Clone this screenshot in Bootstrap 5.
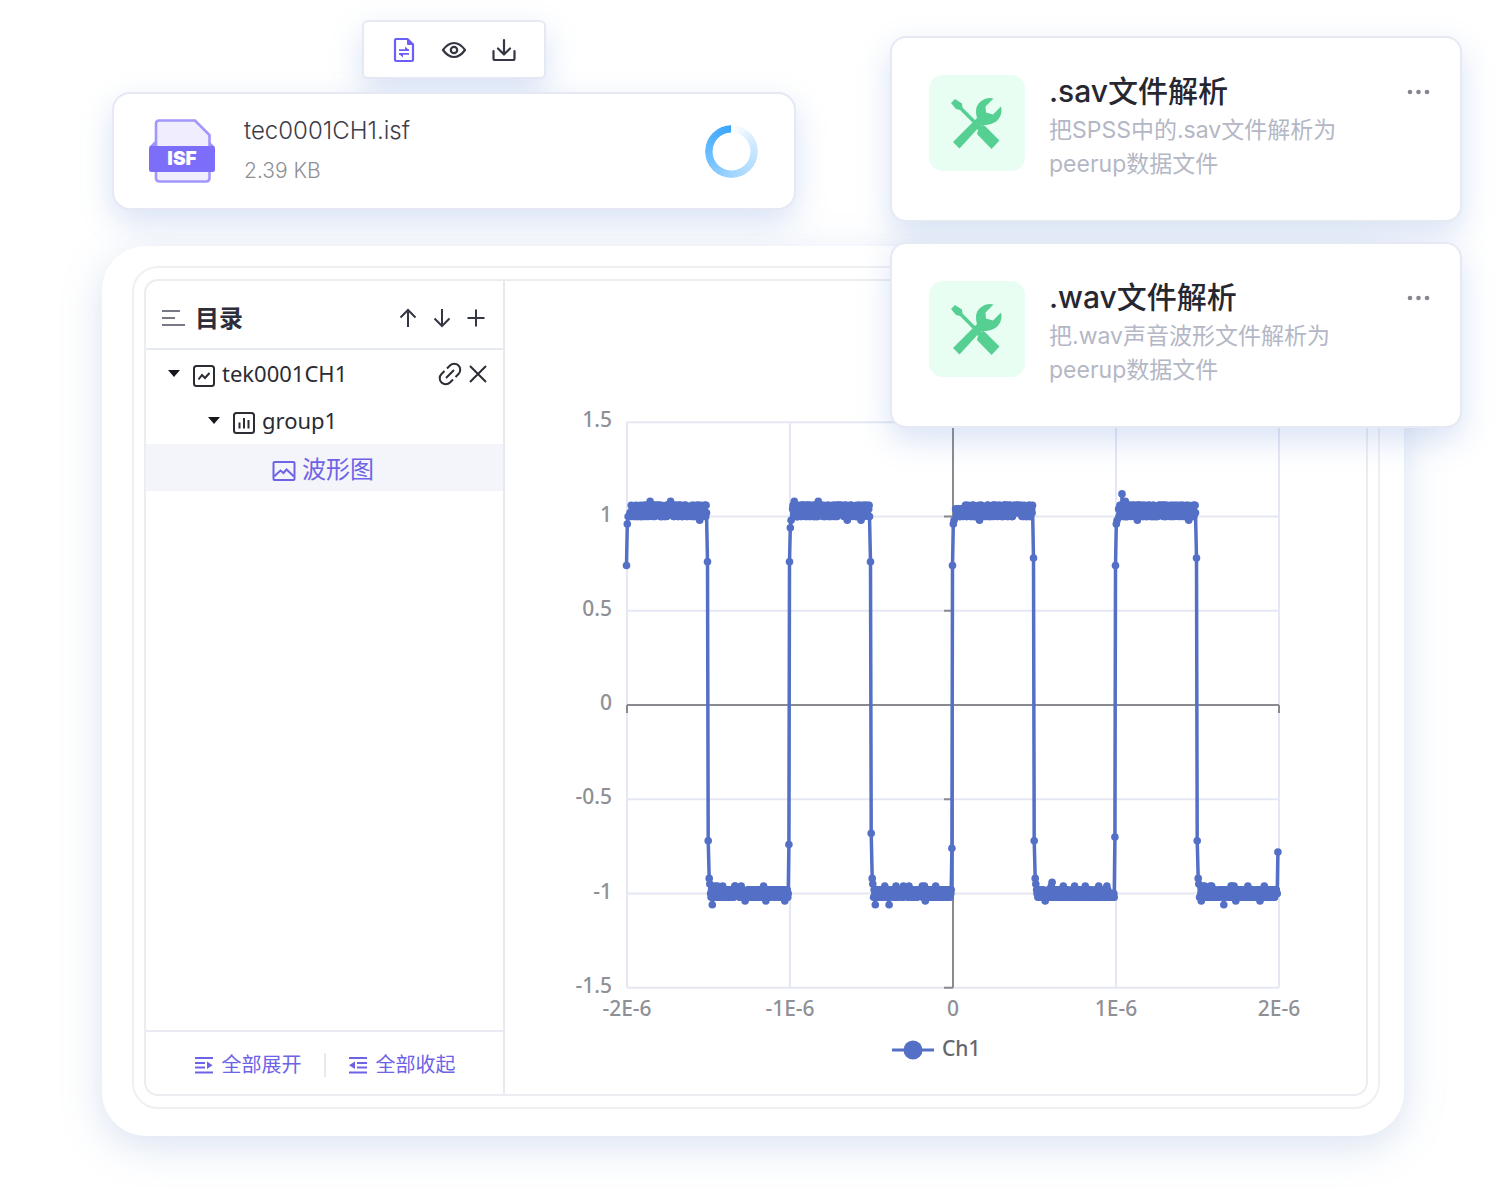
<!DOCTYPE html>
<html lang="zh-CN">
<head>
<meta charset="utf-8">
<meta name="viewport" content="width=device-width, initial-scale=1">
<title>文件解析</title>
<link href="https://cdn.jsdelivr.net/npm/bootstrap@5.3.0/dist/css/bootstrap.min.css" rel="stylesheet">
<style>
  :root { --ink: #2d2e3a; --violet: #6e63e6; --edge: #e6e9f4; --shade: 0 12px 32px rgba(92, 132, 214, .24); }
  body { font-family: "Noto Sans", "Noto Sans CJK SC", sans-serif; color: var(--ink); background: #fff; }
  svg { display: block; }
  .stage { padding: 20px 98px 58px 102px; overflow: hidden; }
  .upload { width: 684px; max-width: 100%; margin: 0 0 36px 10px; gap: 13px; }
  .floaty { background: #fff; border: 2px solid var(--edge); box-shadow: var(--shade); }
  .tools-strip { height: 59px; padding: 0 28px; gap: 24px; border-radius: 6px; }
  .plain-btn { background: none; border: 0; padding: 0; color: inherit; }
  .convert { color: #6c5ff6; }
  .file-box { height: 118px; padding: 0 36px 0 35px; gap: 29px; border-radius: 18px; }
  .latin { font-family: Inter, "Noto Sans CJK SC", sans-serif; }
  .file-name { font-size: 24px; line-height: 32px; font-weight: 300; color: #3c3d49; }
  .file-size { font-size: 21px; line-height: 32px; font-weight: 300; color: #8f8f94; margin-top: 8px; }
  .ring { width: 53px; height: 53px; border-radius: 50%;
    background: conic-gradient(#fff, #cfe9ff 20%, #9fd5ff 50%, #6cbeff 72%, #38a6fd);
    -webkit-mask: radial-gradient(closest-side, transparent 70%, #000 73%);
    mask: radial-gradient(closest-side, transparent 70%, #000 73%); }

  .shell { background: #fff; border-radius: 44px; padding: 20px 24px 27px 30px; box-shadow: 0 10px 40px rgba(110, 145, 200, .26); }
  .frame-outer { border: 2px solid #f0f0f2; border-radius: 26px; padding: 11px 10px; }
  .frame-inner { border: 2px solid #ecedf0; border-radius: 14px; }
  .side { width: 359px; border-right: 2px solid #e9eaee; }
  .side-head { height: 69px; padding: 6px 17px 0 15px; border-bottom: 2px solid #e6ebf2; }
  .side-title { font-size: 24px; font-weight: 700; line-height: 32px; }
  .tree-row { height: 47px; font-size: 22px; gap: 6px; color: #2a2b33; }
  .lv1 { padding: 0 15px 0 20px; }
  .lv2 { padding-left: 60px; }
  .lv3 { padding: 2px 0 0 126px; background: #f4f5fb; font-size: 24px; }
  .lv3, .side-foot { color: var(--violet); }
  .side-foot { height: 64px; border-top: 2px solid #e9eaf4; font-size: 20px; padding-top: 4px; }
  .side-foot button { gap: 8px; }
  .split { width: 2px; height: 24px; background: #e8eaf0; margin: 0 22px; }
  .plot text { font-family: "Noto Sans", sans-serif; font-size: 21px; font-weight: 500; fill: #8f9096; }
  .plot .legend-text { fill: #66676d; }

  .overlays { position: absolute; top: 36px; right: 40px; width: 572px; gap: 20px; }
  .tool-box { min-height: 186px; border-radius: 16px; padding: 33px 30px 34px 37px; gap: 24px; }
  .tile { width: 96px; height: 96px; border-radius: 14px; background: #e9fef3; color: #55cf92; margin-top: 4px; padding-top: 2px; }
  .tool-title { font-size: 30px; line-height: 40px; font-weight: 500; color: #262731; margin: 0; }
  .tool-desc { font-size: 23px; line-height: 34px; font-weight: 400; color: #b4b7c5; margin: 2px 0 0; }
  .more { color: #85868f; margin-top: 18px; }
</style>
</head>
<body>
<main class="stage position-relative">
  <section class="upload d-flex flex-column align-items-center">
    <div class="floaty tools-strip d-flex align-items-center">
      <button class="plain-btn convert" aria-label="转换">
        <svg width="24" height="28" viewBox="0 0 24 28" fill="none" stroke="currentColor" stroke-width="2.200"><path d="M3 4.200Q3 3 4.200 3H15.500L21 8.500V23.800Q21 25 19.800 25H4.200Q3 25 3 23.800Z"/><path d="M15.500 3V8.500H21Z" fill="currentColor" stroke-width="1"/><path d="M7 14.200H17M7 17.800H17" stroke-width="1.800"/><path d="M13 10.500V14.500H17.500ZM11 21.500V17.500H6.500Z" fill="currentColor" stroke="none"/></svg>
      </button>
      <button class="plain-btn" aria-label="预览">
        <svg width="28" height="28" viewBox="0 0 28 28" fill="none" stroke="#353644" stroke-width="2.200"><path d="M3 14Q8 7 14 7T25 14Q20 21 14 21T3 14Z" stroke-linejoin="round"/><circle cx="14" cy="14" r="3.200"/></svg>
      </button>
      <button class="plain-btn" aria-label="下载">
        <svg width="24" height="28" viewBox="0 0 24 28" fill="none" stroke="#353644" stroke-width="2.200" stroke-linecap="round" stroke-linejoin="round"><path d="M12 4V18M6 12.500L12 18.500L18 12.500M1.500 15V22.500Q1.500 24 3 24H21Q22.500 24 22.500 22.500V15"/></svg>
      </button>
    </div>
    <article class="floaty file-box d-flex align-items-center w-100 latin">
      <svg width="66" height="66" viewBox="0 0 66 66" role="img" aria-label="ISF 文件">
        <path d="M0 29L7 22V29ZM66 29L59 22V29Z" fill="#9b90fb"/>
        <path d="M10 2.500H46L60.500 17V60Q60.500 63.500 57 63.500H10.500Q7 63.500 7 60V6Q7 2.500 10 2.500Z" fill="#f0edfe" stroke="#a297fc" stroke-width="2.600"/>
        <rect y="28" width="66" height="26" rx="2.500" fill="#7c6ef8"/>
        <text x="33" y="47" text-anchor="middle" font-family="Inter, sans-serif" font-weight="900" font-size="19" fill="#fff">ISF</text>
      </svg>
      <div class="flex-grow-1">
        <div class="file-name">tec0001CH1.isf</div>
        <div class="file-size">2.39 KB</div>
      </div>
      <div class="ring" role="progressbar" aria-label="解析中"></div>
    </article>
  </section>

  <section class="shell position-relative">
    <div class="frame-outer">
      <div class="frame-inner d-flex overflow-hidden">
        <aside class="side d-flex flex-column flex-shrink-0">
          <header class="side-head d-flex align-items-center">
            <svg width="26" height="22" viewBox="0 0 26 22" stroke="#777987" stroke-width="2"><path d="M1 4H19M1 11H14M1 18H24"/></svg>
            <h2 class="side-title mb-0 ms-2 flex-grow-1">目录</h2>
            <div class="d-flex" style="gap:14px">
              <button class="plain-btn" aria-label="上移"><svg width="20" height="22" viewBox="0 0 20 22" fill="none" stroke="#353644" stroke-width="2"><path d="M10 20V3M2.500 10.500L10 3L17.500 10.500"/></svg></button>
              <button class="plain-btn" aria-label="下移"><svg width="20" height="22" viewBox="0 0 20 22" fill="none" stroke="#353644" stroke-width="2"><path d="M10 2V19M2.500 11.500L10 19L17.500 11.500"/></svg></button>
              <button class="plain-btn" aria-label="新增"><svg width="20" height="22" viewBox="0 0 20 22" fill="none" stroke="#353644" stroke-width="2"><path d="M10 2.500V19.500M1.500 11H18.500"/></svg></button>
            </div>
          </header>
          <div class="flex-grow-1">
            <div class="tree-row lv1 d-flex align-items-center">
              <svg class="me-1" width="16" height="10" viewBox="0 0 16 10"><path d="M2 1H14L8 8Z" fill="#16171c"/></svg>
              <svg class="mt-1" width="24" height="24" viewBox="0 0 24 24" fill="none" stroke="#2b2c34" stroke-width="2"><rect x="2" y="2" width="20" height="20" rx="2.500"/><path d="M6.500 15.500L10 11L13 14L17.500 9"/></svg>
              <span class="flex-grow-1">tek0001CH1</span>
              <button class="plain-btn" aria-label="链接"><svg width="24" height="24" viewBox="0 0 24 24" fill="none" stroke="#2b2c34" stroke-width="2"><path d="M9 6.500L12 3.500A5.300 5.300 0 0 1 20.500 12L17.500 15M15 17.500L12 20.500A5.300 5.300 0 0 1 3.500 12L6.500 9M8 16L16 8"/></svg></button>
              <button class="plain-btn" aria-label="关闭"><svg width="20" height="20" viewBox="0 0 20 20" stroke="#2b2c34" stroke-width="2"><path d="M2 2L18 18M18 2L2 18"/></svg></button>
            </div>
            <div class="tree-row lv2 d-flex align-items-center">
              <svg class="me-1" width="16" height="10" viewBox="0 0 16 10"><path d="M2 1H14L8 8Z" fill="#16171c"/></svg>
              <svg class="mt-1" width="24" height="24" viewBox="0 0 24 24" fill="none" stroke="#2b2c34" stroke-width="2"><rect x="2" y="2" width="20" height="20" rx="2.500"/><path d="M7.500 11.500V17.500M12 7V17.500M16.500 9V17.500"/></svg>
              <span>group1</span>
            </div>
            <div class="tree-row lv3 d-flex align-items-center">
              <svg class="mt-1" width="24" height="22" viewBox="0 0 24 22" fill="none" stroke="currentColor" stroke-width="2"><rect x="1.500" y="2" width="21" height="18" rx="1"/><path d="M2 16.500L8.500 10.500L11.500 13L14.500 9.500L22 16.500"/></svg>
              <span>波形图</span>
            </div>
          </div>
          <footer class="side-foot d-flex align-items-center justify-content-center">
            <button class="plain-btn d-flex align-items-center"><svg width="20" height="18" viewBox="0 0 20 18" stroke="currentColor" stroke-width="2"><path d="M1 2H19M1 7H11M1 11.500H11M1 16.500H19"/><path d="M13 5.500L18.500 9.250L13 13Z" fill="currentColor" stroke="none"/></svg>全部展开</button>
            <span class="split"></span>
            <button class="plain-btn d-flex align-items-center"><svg width="20" height="18" viewBox="0 0 20 18" stroke="currentColor" stroke-width="2"><path d="M1 2H19M9 7H19M9 11.500H19M1 16.500H19"/><path d="M7 5.500L1 9.250L7 13Z" fill="currentColor" stroke="none"/></svg>全部收起</button>
          </footer>
        </aside>
        <div class="flex-grow-1">
          <svg class="plot w-100" id="plot" viewBox="0 0 861 813" role="img" aria-label="Ch1 波形图"></svg>
        </div>
      </div>
    </div>
  </section>

  <div class="overlays d-flex flex-column latin">
    <article class="floaty tool-box d-flex align-items-start">
      <div class="tile d-flex align-items-center justify-content-center flex-shrink-0"><svg width="54" height="54" viewBox="0 0 54 54"><use href="#wrench"/></svg></div>
      <div class="flex-grow-1"><h3 class="tool-title">.sav文件解析</h3><p class="tool-desc">把SPSS中的.sav文件解析为<br>peerup数据文件</p></div>
      <button class="plain-btn more" aria-label="更多"><svg width="24" height="6" viewBox="0 0 24 6" fill="currentColor"><circle cx="4" cy="3" r="2.300"/><circle cx="12.500" cy="3" r="2.300"/><circle cx="21" cy="3" r="2.300"/></svg></button>
    </article>
    <article class="floaty tool-box d-flex align-items-start">
      <div class="tile d-flex align-items-center justify-content-center flex-shrink-0"><svg width="54" height="54" viewBox="0 0 54 54"><use href="#wrench"/></svg></div>
      <div class="flex-grow-1"><h3 class="tool-title">.wav文件解析</h3><p class="tool-desc">把.wav声音波形文件解析为<br>peerup数据文件</p></div>
      <button class="plain-btn more" aria-label="更多"><svg width="24" height="6" viewBox="0 0 24 6" fill="currentColor"><circle cx="4" cy="3" r="2.300"/><circle cx="12.500" cy="3" r="2.300"/><circle cx="21" cy="3" r="2.300"/></svg></button>
    </article>
  </div>
</main>

<svg width="0" height="0" class="position-absolute" aria-hidden="true">
  <defs>
    <g id="wrench" fill="#55cf92">
      <path d="M1 6L5 2L12 6.500L12.500 10.500L26 24L30 28.500L33.500 28L35.500 29.500L49.500 43.500L41.500 52L27 37L28 33L24 27L10 13L6 12Z"/>
      <path d="M43.500 1.500C36 -1 26 5 26 14C26 17 26.500 19 27 21L3 45L9.500 51.500L31 28C35 28 38 28 41 27C49 25 53 17 51 9.500L43 17.500L36 15.500L35.500 9.500Z"/>
    </g>
  </defs>
</svg>

<script src="https://cdn.jsdelivr.net/npm/bootstrap@5.3.0/dist/js/bootstrap.bundle.min.js"></script>
<script>
  const X = v => 448 + v * 163, Y = v => 424 - v * 188.5;
  const parts = [];
  const line = (x1, y1, x2, y2, c) => parts.push(`<path d="M${x1} ${y1}L${x2} ${y2}" stroke="${c}" stroke-width="2"/>`);
  for (let v = -2; v <= 2; v++) line(X(v), Y(1.5), X(v), Y(-1.5), '#e5e8f4');
  for (let v = -1.5; v <= 1.5; v += .5) {
    line(X(-2), Y(v), X(2), Y(v), '#e5e8f4');
    line(X(0) - 9, Y(v), X(0), Y(v), '#8a8b91');
    parts.push(`<text x="107" y="${Y(v) + 5}" text-anchor="end">${v}</text>`);
  }
  line(X(0), Y(1.5), X(0), Y(-1.5), '#8a8b91');
  line(X(-2), Y(0), X(2), Y(0), '#8a8b91');
  line(X(-2), Y(0), X(-2), Y(0) + 8, '#8a8b91');
  line(X(2), Y(0), X(2), Y(0) + 8, '#8a8b91');
  ['-2E-6', '-1E-6', '0', '1E-6', '2E-6'].forEach((t, i) =>
    parts.push(`<text x="${X(i - 2)}" y="735" text-anchor="middle">${t}</text>`));

  // Oscilloscope samples, [time, volts]: edge points, then the quantised noise of each plateau.
  let seed = 11;
  const rnd = () => (seed = (seed * 16807) % 2147483647) / 2147483647;
  const rise = [[.74, .96, 1.0], [.76, .94, .98], [.74, .96, .98], [.74, .96, .98]];
  const peaks = [{ 12: 1.08, 24: 1.08, 41: .98 }, { 1: 1.08, 15: 1.08, 32: .98, 40: .98 }, { 14: .98 }, { 2: 1.12, 4: 1.08, 11: .98, 41: .98 }];
  const fall = [.76, .76, .78, .78], drop = [-.72, -.68, -.72, -.72], lift = [-.74, -.76, -.70, -.78];
  const dips = [{ 1: -1.06, 7: -.96, 14: -.96, 20: -1.04, 32: -1.04, 43: -1.04 }, { 1: -1.06, 9: -1.06, 13: -.96, 30: -1.04, 36: -.96 },
    { 5: -1.04, 9: -.94, 22: -.96, 36: -.96 }, { 1: -1.04, 7: -.96, 14: -1.06, 21: -1.04, 28: -.96, 35: -1.04 }];
  const pts = [];
  for (let k = 0; k < 4; k++) {
    const t0 = k - 2;
    rise[k].forEach((v, i) => pts.push([t0 - .003 + i * .005, v]));
    for (let i = 0; i <= 180; i++) {
      const slot = i / 4;
      pts.push([t0 + .016 + i / 180 * .472, peaks[k][slot] || 1 + .02 * Math.floor(rnd() * 4)]);
    }
    pts.push([t0 + .494, fall[k]], [t0 + .498, drop[k]], [t0 + .504, -.92], [t0 + .508, -.95]);
    for (let i = 0; i <= 180; i++) {
      const slot = i / 4;
      pts.push([t0 + .513 + i / 180 * .476, dips[k][slot] || -1.02 + .02 * Math.floor(rnd() * 3.1)]);
    }
    pts.push([t0 + .993, lift[k]]);
  }
  const xy = pts.map(([t, v]) => [X(t).toFixed(1), Y(v).toFixed(1)]);
  parts.push(`<polyline points="${xy.map(p => p.join()).join(' ')}" fill="none" stroke="#5470c6" stroke-width="3.500" stroke-linejoin="round"/>`);
  xy.forEach(p => parts.push(`<circle cx="${p[0]}" cy="${p[1]}" r="3.800" fill="#5470c6"/>`));
  parts.push('<path d="M387 769H429" stroke="#5470c6" stroke-width="3"/><circle cx="408" cy="769" r="9.500" fill="#5470c6"/>');
  parts.push('<text class="legend-text" x="437" y="775">Ch1</text>');
  document.getElementById('plot').innerHTML = parts.join('');
</script>
</body>
</html>
